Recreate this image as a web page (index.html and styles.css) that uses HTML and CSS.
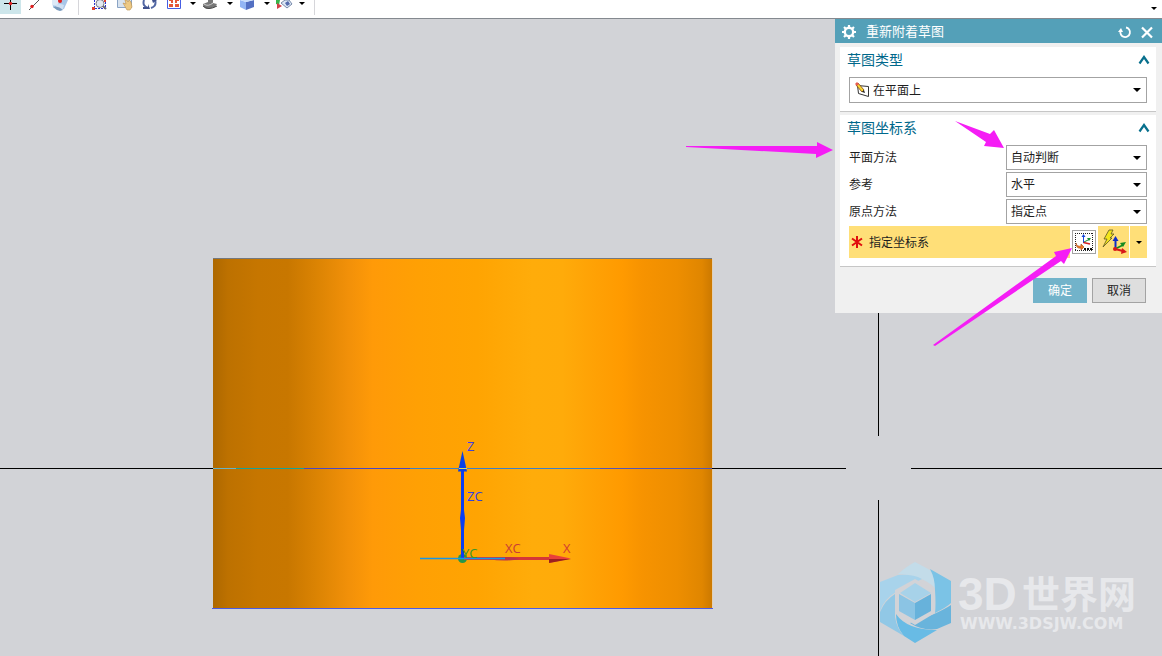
FILE: index.html
```html
<!DOCTYPE html>
<html lang="zh-CN">
<head>
<meta charset="utf-8">
<title>重新附着草图</title>
<link rel="stylesheet" href="styles.css">
</head>
<body>
<header class="toolbar">
  <button class="tool tool-active" aria-label="点"><svg width="21" height="14"><path d="M4 3.500h13M10.500 0v10" stroke="#000"/><circle cx="10.500" cy="3.500" r="1.700" fill="#e02020"/></svg></button>
  <button class="tool" aria-label="直线"><svg width="16" height="14"><path d="M1 10L11 0" stroke="#555"/><circle cx="4" cy="6.500" r="1.700" fill="#e02020"/></svg></button>
  <button class="tool" aria-label="曲面"><svg width="20" height="14"><path d="M1 0H17L13 9Q8 11 2 7Z" fill="#a9c6e8"/><path d="M1 0H9L6 6 1 5Z" fill="#dce9f7"/><path d="M5 5Q9 3 13 5L12 9 5 8Z" fill="#cfe0f3"/><path d="M2 7Q7 5 12 10L9 11Q5 10 2 7Z" fill="#7799bd"/><circle cx="9" cy="1" r="2" fill="#e02020"/></svg></button>
  <span class="divider"></span>
  <button class="tool" aria-label="缩放"><svg width="18" height="14"><path d="M3.500 0v8.500h11V0" fill="none" stroke="#2836cf" stroke-dasharray="2 1"/><circle cx="9" cy="3.500" r="4" fill="#e3eaf0" stroke="#778"/><path d="M12 6L15 9" stroke="#667" stroke-width="2"/><path d="M1 7h3v3H1zM13 0h2v2h-2z" fill="#d43"/></svg></button>
  <button class="tool" aria-label="平移"><svg width="18" height="14"><path d="M1.500 0v7.500h14V0" fill="#d8e3ef" stroke="#8aa4c5"/><path d="M7 3L10 4 9 0 11 0 12 2 13 0 15 2 16 7 14 10H11Z" fill="#edc983" stroke="#bd914c" stroke-width=".6"/></svg></button>
  <button class="tool" aria-label="旋转"><svg width="18" height="14"><path d="M3 0Q1 6 7 8M10 8Q16 6 14 0" fill="none" stroke="#5267a4" stroke-width="2"/><path d="M2 7H7V4L9 9H2ZM11 0H16L12 3Z" fill="#40518d"/></svg></button>
  <button class="tool" aria-label="适合窗口"><svg width="18" height="14"><path d="M1.500 0v8.500h13V0" fill="#fff" stroke="#465ee3"/><path d="M3 0h4v3H5V1H3zM9 0h4v1h-2v2H9zM3 4h4v3H3zM9 4h4v3H9z" fill="#e55837"/></svg></button>
  <button class="caret" aria-label="更多"></button>
  <button class="tool" aria-label="显示"><svg width="20" height="14"><path d="M2 4L7 2V0H12V3L16 4 14 7 8 9Q2 9 2 4Z" fill="#777"/><path d="M3 4Q7 7 12 3" fill="none" stroke="#ccc"/><path d="M2 6Q7 11 16 6" fill="none" stroke="#444"/></svg></button>
  <button class="caret" aria-label="更多"></button>
  <button class="tool" aria-label="视图"><svg width="20" height="14"><path d="M2 0L8 2V10L2 7Z" fill="#92b5f4"/><path d="M8 2L16 0V7L8 10Z" fill="#5370c3"/><path d="M2 0H16L8 2Z" fill="#c8ddfb"/></svg></button>
  <button class="caret" aria-label="更多"></button>
  <button class="tool" aria-label="渲染"><svg width="18" height="14"><path d="M1 0H5L4 5 1 4Z" fill="#38b44a"/><path d="M2 3L7 6 2 9Z" fill="#d33e46"/><path d="M6 3L10 0H14L17 4 12 8Z" fill="#dce7f5" stroke="#7789a9"/><path d="M10 3L13 1 15 4 12 6Z" fill="#536aab"/></svg></button>
  <button class="caret" aria-label="更多"></button>
  <span class="divider divider-end"></span>
  <button class="caret caret-options" aria-label="工具栏选项"></button>
</header>

<main class="viewport">
  <svg class="layer" viewBox="0 19 1162 637" preserveAspectRatio="xMinYMin slice" role="img" aria-label="圆柱模型">
    <defs>
      <linearGradient id="body">
        <stop offset="0" stop-color="#ad6800"/><stop offset=".03" stop-color="#bd7100"/>
        <stop offset=".09" stop-color="#c67600"/><stop offset=".15" stop-color="#c87700"/>
        <stop offset=".21" stop-color="#dc8403"/><stop offset=".27" stop-color="#f19009"/>
        <stop offset=".32" stop-color="#ff9a08"/><stop offset=".41" stop-color="#ffa004"/>
        <stop offset=".53" stop-color="#ffa402"/><stop offset=".64" stop-color="#ffac0a"/>
        <stop offset=".7" stop-color="#ffab0a"/><stop offset=".76" stop-color="#ffa205"/>
        <stop offset=".82" stop-color="#ff9a00"/><stop offset=".86" stop-color="#f79300"/>
        <stop offset=".93" stop-color="#ee8e00"/><stop offset=".98" stop-color="#e08600"/>
        <stop offset="1" stop-color="#cc7900"/>
      </linearGradient>
    </defs>
    <g shape-rendering="crispEdges">
      <rect x="213" y="258" width="499" height="350" fill="url(#body)"/>
      <path d="M213 258.500H712" stroke="#75787c"/>
      <path d="M712.500 259V608" stroke="#e1cfb5"/>
      <path d="M212 608.500H713" stroke="#4a5ce6"/>
      <path d="M0 468.500H213M712 468.500H846M911 468.500H1162M878.500 300V436M878.500 500V656" stroke="#000"/>
      <path d="M213 468.500H236" stroke="#69b5c4"/><path d="M236 468.500H304" stroke="#16a39b"/>
      <path d="M304 468.500H410" stroke="#4848c4"/><path d="M410 468.500H600" stroke="#3c7fc8"/>
      <path d="M600 468.500H712" stroke="#5356b5"/>
    </g>
    <circle cx="462.500" cy="558.500" r="4.500" fill="#26974a"/>
    <path d="M464 558.500H550" stroke="#d53636" stroke-width="3"/>
    <path d="M549 554L571 558.500 549 563Z" fill="#e9403a"/><path d="M549 559H571L549 563Z" fill="#9c2020"/>
    <path d="M488 559Q505 555 520 559 505 562 488 559" fill="#b7344d"/>
    <path d="M461 470H464V510L465 518 464 530V558H461V530L460 518 461 510Z" fill="#0b3ef2"/>
    <path d="M462.500 451L467 471.500H458Z" fill="#0841e5"/>
    <path d="M459 468.500H467" stroke="#d9d960"/>
    <path d="M420 558.500H505" stroke="#1696e9" stroke-width="1.500"/>
    <g class="axis-text">
      <text x="467" y="451" fill="#4040e0">Z</text><text x="467" y="501" fill="#3040e8">ZC</text>
      <text x="462" y="558" fill="#3b962c">YC</text><text x="505" y="553" fill="#c93e36">XC</text><text x="563" y="553" fill="#d43e31">X</text>
    </g>
    <g class="watermark">
      <path d="M915 562L930 570Q936 578 935 588 922 575 898 574 907 566 915 562Z" fill="#c3dce9"/>
      <path d="M930 569L951 581V603Q947 607 935 613 936 605 935 590 935 578 930 569Z" fill="#7bc3e6"/>
      <path d="M898 575Q913 574 922 579L896 592Q884 599 880 611V582Z" fill="#a8d3eb"/>
      <path d="M895 594V617Q897 629 904 636L880 622V612Q885 600 895 594Z" fill="#91c8e6"/>
      <path d="M951 605V623L937 629Q922 631 910 623L934 614Q945 609 951 605Z" fill="#69b4dc"/>
      <path d="M896 614Q907 630 937 630L915 643 904 636Q896 627 896 614Z" fill="#68bbe5"/>
      <path d="M915 579L935 590V613L915 625 895 613V590Z" fill="#d2d3d7"/>
      <path d="M915 583L931 593 915 602 900 593Z" fill="#a7d2e9"/><path d="M899 594L915 603V620L899 611Z" fill="#8bc4e4"/><path d="M915 603L931 594V611L915 620Z" fill="#67b2db"/>
      <text x="958" y="610" class="brand-latin">3D</text><text x="1022" y="608" class="brand-cjk">世界网</text>
      <text x="960" y="629" class="brand-url">WWW.3DSJW.COM</text>
    </g>
  </svg>

  <form class="dialog" aria-label="重新附着草图">
    <div class="titlebar">
      <svg width="16" height="16" viewBox="0 0 16 16"><circle cx="8" cy="8" r="4.200" fill="none" stroke="#fff" stroke-width="2.400"/><path d="M8 1V4M8 12V15M1 8H4M12 8H15M3 3L5 5M11 11L13 13M13 3L11 5M5 11L3 13" stroke="#fff" stroke-width="2.200"/></svg>
      <h1>重新附着草图</h1>
      <button type="button" class="plain" aria-label="重置"><svg width="14" height="14" viewBox="0 0 14 14"><path d="M8 2.500A4.800 4.800 0 1 1 2.500 6" fill="none" stroke="#fff" stroke-width="1.800"/><path d="M0 7L3 3 5 7Z" fill="#fff"/></svg></button>
      <button type="button" class="plain" aria-label="关闭"><svg width="14" height="14" viewBox="0 0 14 14"><path d="M2 2.500L12 12.500M12 2.500L2 12.500" stroke="#fff" stroke-width="2.200"/></svg></button>
    </div>
    <section class="panel">
      <div class="panel-head"><h2>草图类型</h2><button type="button" class="plain" aria-label="折叠"><svg width="12" height="10"><path d="M1.500 8.500L6 2 10.500 8.500" fill="none" stroke="#08708d" stroke-width="2.200"/></svg></button></div>
      <div class="select select-type">
        <svg class="select-icon" width="16" height="16" viewBox="0 0 16 16"><path d="M3.500 3.500L14.500 4.500V14.500L4.500 11.500Z" fill="#fff" stroke="#333"/><path d="M2 3L4 1 10 8 8 10Z" fill="#f9d531" stroke="#78420f" stroke-width=".8"/><path d="M1 2L3 0 5 2 3 4Z" fill="#e65b4f"/><path d="M8 10L10 8 11 11Z" fill="#222"/></svg>
        <select aria-label="草图类型"><option>在平面上</option></select>
      </div>
    </section>
    <section class="panel">
      <div class="panel-head"><h2>草图坐标系</h2><button type="button" class="plain" aria-label="折叠"><svg width="12" height="10"><path d="M1.500 8.500L6 2 10.500 8.500" fill="none" stroke="#08708d" stroke-width="2.200"/></svg></button></div>
      <div class="rows">
        <div class="row"><label for="plane">平面方法</label><div class="select"><select id="plane"><option>自动判断</option></select></div></div>
        <div class="row"><label for="ref">参考</label><div class="select"><select id="ref"><option>水平</option></select></div></div>
        <div class="row"><label for="origin">原点方法</label><div class="select"><select id="origin"><option>指定点</option></select></div></div>
        <div class="pick">
          <div class="pick-label"><svg width="12" height="12" viewBox="0 0 12 12"><path d="M6 0V12M1 2.500L11 9.500M11 2.500L1 9.500" stroke="#e00d0d" stroke-width="2"/></svg><span>指定坐标系</span></div>
          <button type="button" class="csys" aria-label="坐标系对话框"><svg width="22" height="22" viewBox="0 0 22 22"><path d="M2 2.500H20M2 19.500H20M2.500 2V20M19.500 2V20" fill="none" stroke="#222" stroke-dasharray="1 1" shape-rendering="crispEdges"/><path d="M10.500 12V5" stroke="#1647dc"/><path d="M8.500 6L10.500 3 12.500 6Z" fill="#1647dc"/><path d="M11 11L16 8.500" stroke="#168b37"/><path d="M14 7L18 7 16 10Z" fill="#168b37"/><path d="M10.500 11.500L17 13" stroke="#d32020" stroke-width="1.500"/><path d="M3 12Q4 16 8 15V13L11 16 8 19V17Q3 18 3 12Z" fill="#ef7c25" stroke="#a8430d" stroke-width=".6"/><path d="M11 17h2v2h-2zM14 17h2v2h-2zM17 17h2v2h-2z" fill="#111"/></svg></button>
          <button type="button" class="infer" aria-label="自动判断坐标系"><svg width="26" height="26" viewBox="0 0 26 26"><path d="M8 1L12 1 10 5 13 5 9 9 11 9 2 18 6 10H3Z" fill="#f3e51b" stroke="#5a5524" stroke-width=".8"/><path d="M14.500 20V11" stroke="#102dc5" stroke-width="2"/><path d="M11.500 12L14.500 7 17.500 12Z" fill="#102dc5"/><path d="M14 20L22 16" stroke="#168b20" stroke-width="1.800"/><path d="M19 14L25 13 22 18Z" fill="#168b20"/><path d="M14 20L22 22" stroke="#d81919" stroke-width="2"/><path d="M21 19L26 23 20 25Z" fill="#d81919"/><circle cx="14" cy="20" r="2" fill="#d81919"/></svg></button>
          <button type="button" class="infer-more" aria-label="更多选项"></button>
        </div>
      </div>
    </section>
    <div class="actions"><button type="submit" class="btn btn-ok">确定</button><button type="button" class="btn">取消</button></div>
  </form>

  <svg class="layer callouts" viewBox="0 19 1162 637" preserveAspectRatio="xMinYMin slice" aria-hidden="true">
    <path d="M686 146L817 146V142L833 150 816 158V154L686 147Z"/>
    <path d="M955 121L990 134 994 130 1004 148 984 146 986 142Z"/>
    <path d="M933 345L1056 256 1054 252 1072 248 1064 264 1061 261 935 346Z"/>
  </svg>
</main>
</body>
</html>
```
FILE: styles.css
```css
* { box-sizing: border-box; }
body {
  margin: 0;
  height: 100vh;
  display: flex;
  flex-direction: column;
  overflow: hidden;
  font: 12px/16px "Noto Sans CJK SC", sans-serif;
  color: #1e1e1e;
}
button { margin: 0; padding: 0; border: 0; background: none; font: inherit; color: inherit; }
svg { display: block; flex: none; }
h1, h2 { margin: 0; font-weight: 400; }

.toolbar {
  flex: none;
  height: 19px;
  display: flex;
  align-items: flex-start;
  background: #fff;
  border-bottom: 1px solid #84898f;
}
.tool { margin-right: 7px; }
.tool:has(+ .caret) { margin-right: 0; }
.tool-active { background: #cde6eb; }
.divider { width: 1px; height: 15px; margin-right: 12px; background: #d6d6da; }
.divider-end { margin: 0 4px; }
.caret { width: 17px; height: 10px; display: grid; justify-content: center; padding-top: 2px; }
.caret-options { margin-left: auto; height: 14px; padding-top: 7px; }
.caret::before, .infer-more::before, .select::after {
  content: "";
  border: 3px solid transparent;
  border-top: 3px solid #000;
  border-bottom: 0;
}

.viewport { flex: 1; min-height: 0; position: relative; background: #d2d3d7; }
.layer { position: absolute; inset: 0; width: 100%; height: 100%; }
.callouts { pointer-events: none; fill: #f51df5; }
.axis-text { font: 13px "Open Sans", sans-serif; }
.watermark text { fill: #e7e8eb; }
.brand-latin { font: bold 46px "Liberation Sans", sans-serif; }
.brand-cjk { font: bold 38px "Noto Sans CJK SC", sans-serif; }
.brand-url { font: bold 16px "DejaVu Sans", sans-serif; }

.dialog {
  position: absolute;
  top: 0;
  right: 0;
  width: 327px;
  background: #f0f0f0;
  padding-bottom: 10px;
}
.titlebar { height: 24px; display: flex; align-items: center; gap: 8px; padding: 2px 8px 0 6px; background: #54a0b8; color: #fff; }
.titlebar h1 { flex: 1; font-size: 13px; line-height: 20px; padding: 0 0 3px 1px; }
.panel { margin: 4px 6px 0 5px; padding: 0 9px 8px; background: #fff; border-bottom: 1px solid #c6c6c6; }
.panel + .panel { margin-top: 3px; }
.panel-head { height: 30px; display: flex; align-items: center; justify-content: space-between; padding-bottom: 4px; }
.panel-head h2 { font-size: 14px; line-height: 20px; color: #00688b; margin-left: -2px; padding-bottom: 2px; }
.panel-head .plain { margin-right: -3px; }

.select { display: flex; align-items: center; position: relative; height: 25px; border: 1px solid #a3a3a3; background: #fff; }
.select-type { height: 26px; padding-left: 4px; }
.select select { flex: 1; height: 100%; appearance: none; border: 0; padding: 0 20px 1px 4px; background: transparent; font: inherit; color: inherit; }
.select-type select { padding-left: 3px; }
.select::after { position: absolute; right: 5px; border-width: 4px 4px 0; pointer-events: none; }
.rows { display: grid; gap: 2px; }
.row { display: flex; align-items: center; justify-content: space-between; }
.row label { padding-bottom: 1px; }
.row .select { width: 141px; }
.pick { display: flex; align-items: center; height: 32px; gap: 2px; }
.pick-label { flex: 1; align-self: stretch; display: flex; align-items: center; gap: 6px; padding-left: 2px; background: #ffdf78; }
.pick-label span { padding-bottom: 1px; }
.csys { border: 1px solid #a3a3a3; background: #fff; }
.infer, .infer-more { align-self: stretch; display: grid; place-content: center; background: #ffdf78; }
.infer { width: 31px; }
.infer-more { width: 17px; margin-left: -1px; }

.actions { display: flex; justify-content: flex-end; gap: 5px; margin: 11px 16px 0; }
.btn { width: 54px; height: 25px; padding-bottom: 1px; border: 1px solid #a3a3a3; background: #dedede; }
.btn-ok { border-color: #72b3ca; background: #72b3ca; color: #fff; }
```
